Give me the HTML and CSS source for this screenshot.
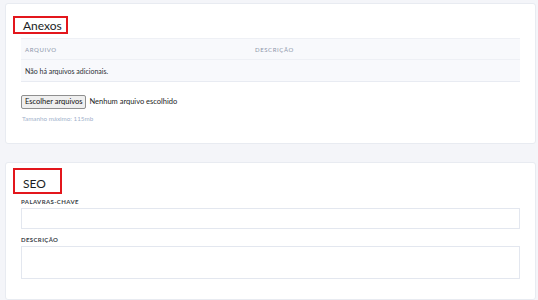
FILE: index.html
```html
<!DOCTYPE html>
<html lang="pt">
<head>
    <meta charset="UTF-8">
    <meta name="viewport" content="width=device-width, initial-scale=1.0">
    <title>Anexos e SEO</title>
    <link rel="stylesheet" href="styles.css">
</head>
<body>
    <div class="card">
        <h2 class="card-title">Anexos</h2>
        <table class="files">
            <thead>
                <tr>
                    <th class="col-file">Arquivo</th>
                    <th>Descrição</th>
                </tr>
            </thead>
            <tbody>
                <tr>
                    <td colspan="2">Não há arquivos adicionais.</td>
                </tr>
            </tbody>
        </table>
        <div class="upload">
            <span class="upload-btn">Escolher arquivos</span>
            <span class="upload-name">Nenhum arquivo escolhido</span>
        </div>
        <p class="hint">Tamanho máximo: 115mb</p>
    </div>

    <div class="card card-seo">
        <h2 class="card-title seo-title">SEO</h2>
        <label class="field-label">Palavras-chave</label>
        <div class="field-input"></div>
        <label class="field-label">Descrição</label>
        <div class="field-input field-area"></div>
    </div>
</body>
</html>
```

FILE: styles.css
```css
body {
    margin: 0;
    padding: 3px 2px 0 5px;
    background-color: #f4f5f9;
    font-family: Lato, "Open Sans", sans-serif;
    color: #2b2f36;
}
.card {
    background-color: #fff;
    border: 1px solid #e8ebf1;
    border-radius: 3px;
    padding: 12px 15px 0 15px;
    height: 141px;
    box-sizing: border-box;
}
.card-seo {
    margin-top: 18px;
    height: 138px;
    padding-top: 5px;
}
.card-title {
    box-sizing: border-box;
    width: 55px;
    height: 18px;
    margin: 0 0 4px -8px;
    padding: 1px 0 0 8px;
    border: 2px solid #e3161c;
    font-size: 12px;
    font-weight: 400;
    line-height: 13px;
    color: #1b1e24;
}
.seo-title {
    width: 49px;
    height: 26px;
    padding-top: 6px;
    line-height: 16px;
    margin-bottom: 4px;
}
.files {
    border-collapse: collapse;
    width: 100%;
    background-color: #f8f9fc;
}
.files th {
    text-align: left;
    font-size: 6px;
    font-weight: 400;
    letter-spacing: 0.6px;
    text-transform: uppercase;
    color: #8d97aa;
    padding: 0 4px;
    height: 20px;
    border-top: 1px solid #eef0f5;
    border-bottom: 1px solid #eef0f5;
}
.files .col-file {
    width: 222px;
}
.files td {
    font-size: 7px;
    padding: 0 4px;
    height: 21px;
    border-bottom: 1px solid #e8ebf2;
}
.upload {
    display: flex;
    align-items: center;
    margin-top: 13px;
    font-size: 7.5px;
    line-height: 10px;
}
.upload-btn {
    background-color: #efefef;
    border: 1px solid #8f8f8f;
    border-radius: 2px;
    padding: 1px 3px;
    color: #111;
}
.upload-name {
    margin-left: 3px;
    color: #1b1e24;
}
.hint {
    margin: 6px 0 0 1px;
    font-size: 6.3px;
    line-height: 8px;
    color: #9fb1cb;
}
.field-label {
    display: block;
    font-size: 6px;
    line-height: 8px;
    font-weight: 700;
    letter-spacing: 0.4px;
    text-transform: uppercase;
    color: #3a3f48;
    margin-bottom: 2px;
}
.field-input {
    height: 19px;
    border: 1px solid #e3e7ef;
    margin-bottom: 7px;
}
.field-area {
    height: 31px;
}
```
